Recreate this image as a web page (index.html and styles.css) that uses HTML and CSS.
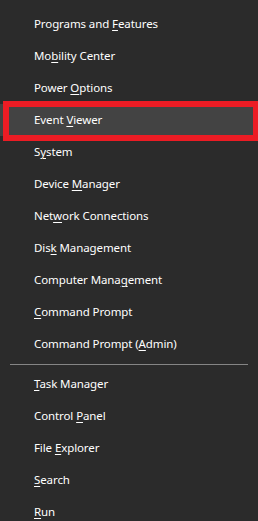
FILE: index.html
```html
<!DOCTYPE html>
<html>
<head>
<meta charset="utf-8">
<link rel="stylesheet" href="styles.css">
</head>
<body>
<div class="menu">
  <div class="item">Programs and <u>F</u>eatures</div>
  <div class="item">Mo<u>b</u>ility Center</div>
  <div class="item">Power <u>O</u>ptions</div>
  <div class="item item-hover">Event <u>V</u>iewer</div>
  <div class="item">S<u>y</u>stem</div>
  <div class="item">Device <u>M</u>anager</div>
  <div class="item">Net<u>w</u>ork Connections</div>
  <div class="item">Dis<u>k</u> Management</div>
  <div class="item">Computer Mana<u>g</u>ement</div>
  <div class="item"><u>C</u>ommand Prompt</div>
  <div class="item">Command Prompt (<u>A</u>dmin)</div>
  <div class="separator"></div>
  <div class="item"><u>T</u>ask Manager</div>
  <div class="item">Control <u>P</u>anel</div>
  <div class="item">File <u>E</u>xplorer</div>
  <div class="item"><u>S</u>earch</div>
  <div class="item"><u>R</u>un</div>
  <div class="annotation"></div>
</div>
</body>
</html>
```
FILE: styles.css
```css
html, body {
  margin: 0;
  padding: 0;
  background: #2b2b2b;
  overflow: hidden;
}
.menu {
  position: relative;
  padding-top: 8px;
  font-family: "Segoe UI", "Noto Sans", sans-serif;
  font-size: 11.5px;
  letter-spacing: -0.1px;
  color: #ffffff;
}
.item {
  height: 32px;
  line-height: 32px;
  padding-left: 34px;
  white-space: nowrap;
}
.item u {
  text-decoration-thickness: 1px;
  text-underline-offset: 2px;
}
.item-hover {
  background: #434343;
}
.separator {
  height: 1px;
  background: #858585;
  margin: 4px 10px 3px 10px;
}
.annotation {
  position: absolute;
  left: 3px;
  top: 101px;
  width: 244px;
  height: 28px;
  border: 6px solid #ec1c24;
}
```
